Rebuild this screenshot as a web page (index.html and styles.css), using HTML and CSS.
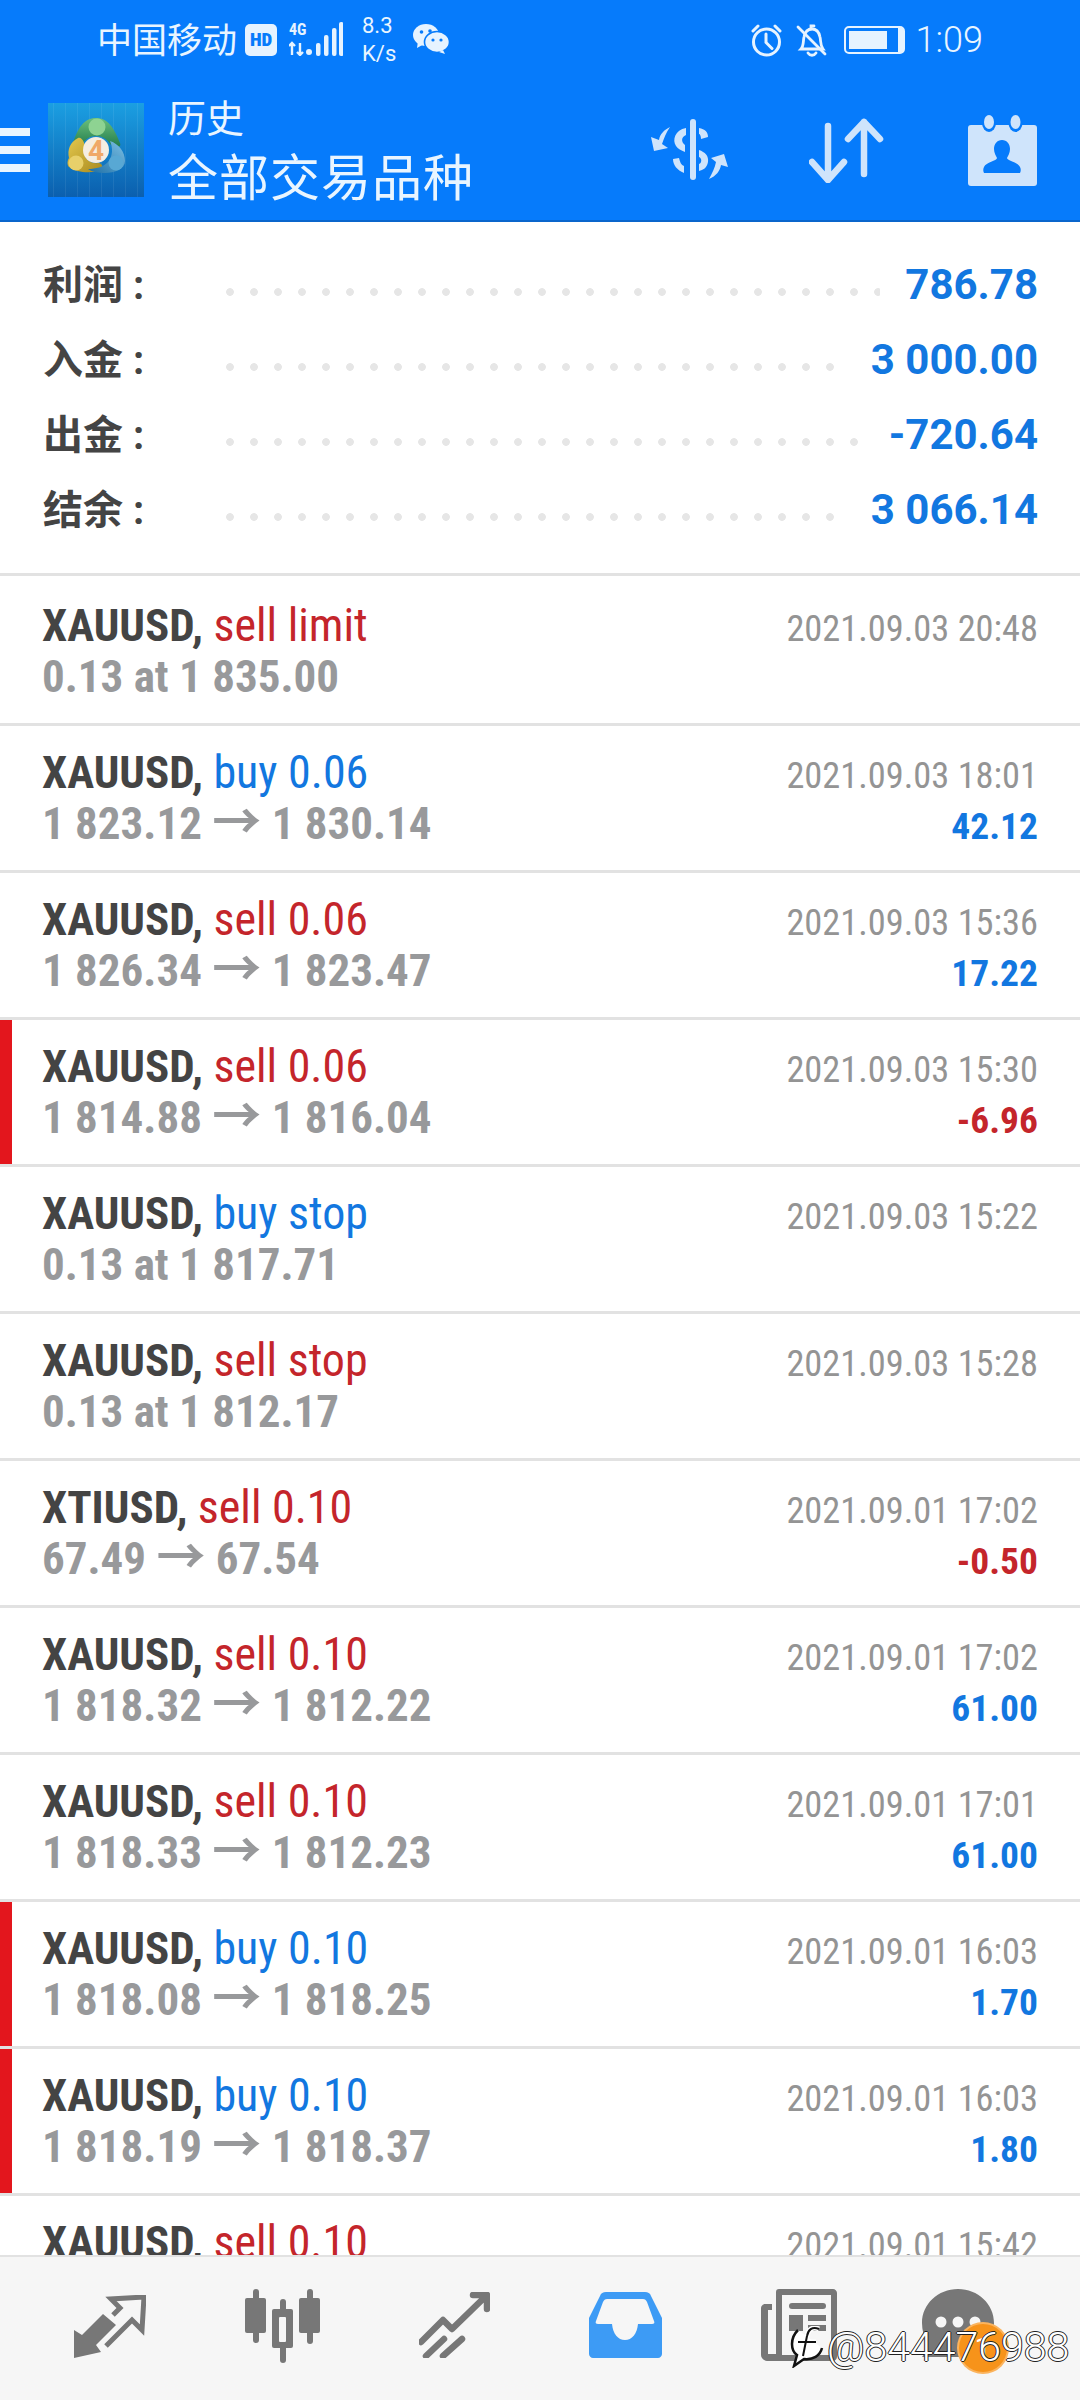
FILE: index.html
```html
<!DOCTYPE html>
<html lang="zh">
<head>
    <meta charset="UTF-8">
    <meta name="viewport" content="width=device-width, initial-scale=1.0">
    <title>历史</title>
    <link rel="stylesheet" href="styles.css">
</head>
<body>
    <header class="header">
        <div class="status-bar">
            <div class="status-left">
                <span class="carrier">中国移动</span>
                <span class="hd-badge">HD</span>
                <svg class="signal" width="54" height="34" viewBox="0 0 54 34">
                    <text x="0" y="13" class="signal-text">4G</text>
                    <path d="M3 21v12M0 24l3-3 3 3M11 33V21M8 30l3 3 3-3" fill="none" stroke="#e6f3ff" stroke-width="2.4"/>
                    <circle cx="20" cy="30" r="3" fill="#e6f3ff"/>
                    <rect x="27" y="21" width="4.5" height="13" rx="2" fill="#e6f3ff"/>
                    <rect x="35" y="13" width="4.5" height="21" rx="2" fill="#e6f3ff"/>
                    <rect x="43" y="6" width="4.5" height="28" rx="2" fill="#e6f3ff"/>
                    <rect x="50" y="0" width="4.5" height="34" rx="2" fill="#e6f3ff"/>
                </svg>
                <span class="net-speed">8.3<br>K/s</span>
                <svg class="wechat" width="36" height="30" viewBox="0 0 36 30">
                    <ellipse cx="13" cy="11" rx="13" ry="11" fill="#e6f3ff"/>
                    <path d="M5 17l-1 7 7-4z" fill="#e6f3ff"/>
                    <ellipse cx="24" cy="18" rx="12.5" ry="10.5" fill="#e6f3ff" stroke="#067bfb" stroke-width="1.6"/>
                    <path d="M30 26l2 4-6-2z" fill="#e6f3ff"/>
                    <circle cx="8.500" cy="8" r="1.800" fill="#067bfb"/>
                    <circle cx="17" cy="7" r="1.800" fill="#067bfb"/>
                    <circle cx="20" cy="16" r="1.600" fill="#067bfb"/>
                    <circle cx="28" cy="16" r="1.600" fill="#067bfb"/>
                </svg>
            </div>
            <div class="status-right">
                <svg width="33" height="33" viewBox="0 0 33 33" fill="none" stroke="#e6f3ff" stroke-width="3">
                    <circle cx="16.500" cy="18" r="13"/>
                    <path d="M16 10v8.500l6 6M3 7l5-5M30 7l-5-5" stroke-linecap="round"/>
                </svg>
                <svg width="31" height="33" viewBox="0 0 31 33" fill="none" stroke="#e6f3ff" stroke-width="2.800">
                    <path d="M5 25c3-3 2-8 3-12 1-5 4-8 8-8s7 3 8 8c1 4 0 8 3 12z"/>
                    <path d="M12 29c2 3 6 3 8 0M15 5V2h3M2 3l27 27" stroke-linecap="round"/>
                </svg>
                <span class="battery"><span class="battery-fill"></span></span>
                <span class="clock">1:09</span>
            </div>
        </div>
        <div class="toolbar">
            <div class="menu-btn"><span></span><span></span><span></span></div>
            <svg class="app-icon" width="96" height="94" viewBox="0 0 96 94">
                <defs>
                    <linearGradient id="tile" x1="0" y1="0" x2="0" y2="1">
                        <stop offset="0" stop-color="#1b9fe2"/>
                        <stop offset="1" stop-color="#0b5fae"/>
                    </linearGradient>
                    <pattern id="grid" width="12" height="94" patternUnits="userSpaceOnUse">
                        <rect x="5" width="1" height="94" fill="#ffffff" opacity="0.07"/>
                    </pattern>
                    <linearGradient id="green" x1="0" y1="0" x2="0" y2="1">
                        <stop offset="0" stop-color="#6cc07c"/>
                        <stop offset="1" stop-color="#1f7a4c"/>
                    </linearGradient>
                    <linearGradient id="gold" x1="0" y1="0" x2="1" y2="1">
                        <stop offset="0" stop-color="#e4c84e"/>
                        <stop offset="1" stop-color="#a98a1e"/>
                    </linearGradient>
                    <linearGradient id="aqua" x1="1" y1="0" x2="0" y2="1">
                        <stop offset="0" stop-color="#7cc0e4"/>
                        <stop offset="1" stop-color="#1c6ea6"/>
                    </linearGradient>
                </defs>
                <rect width="96" height="94" fill="url(#tile)"/>
                <rect width="96" height="94" fill="url(#grid)"/>
                <path d="M48 15c12 0 18 10 24 25 2 5-6 6-9 2-4-6-9-9-15-9s-11 3-14 9c-3 4-11 3-9-2 5-15 11-25 23-25z" fill="url(#green)"/>
                <circle cx="49" cy="24" r="8.500" fill="#8ed392"/>
                <path d="M30 35c-8 4-11 12-9 20-2 3-2 7 0 9 8 6 21 6 31 4 4-2 3-7-1-8-9 1-16-4-14-14 1-4-3-13-7-11z" fill="url(#gold)"/>
                <circle cx="28" cy="60" r="7.500" fill="#e8d06a"/>
                <path d="M62 38c9 3 15 11 15 20 0 8-10 12-20 12-6 0-13-1-17-4 8 0 15-2 20-7 5-6 5-14 2-21z" fill="url(#aqua)"/>
                <circle cx="68" cy="60" r="7.500" fill="#58a8d4"/>
                <circle cx="48" cy="47" r="13" fill="#f5ede2"/>
                <text x="48" y="57" class="mt4-num">4</text>
            </svg>
            <div class="titles">
                <div class="title-small">历史</div>
                <div class="title-big">全部交易品种</div>
            </div>
            <div class="tool-icons">
                <svg width="80" height="62" viewBox="0 0 80 62" fill="#cfe4fb">
                    <rect x="40" y="0" width="6" height="61" rx="3"/>
                    <path d="M36 9c-11 2-14 12-10 18 2 3 5 4 9 6v-7c-4-3-4-8 1-10zM49 9c6 1 9 4 9 9l-7 2c0-3-1-5-2-5z"/>
                    <path d="M49 31c6 2 10 6 9 12-1 6-5 8-9 9v-7c3-1 3-6 0-7zM23 40c0 6 4 11 11 14v-7c-3-1-4-4-5-8z"/>
                    <path d="M20 8C14 11 10 15 9 21L1 18l3 14 14-3-6-4c2-6 4-11 8-17z"/>
                    <path d="M59 60c7-3 11-8 12-14l7 2-4-13-13 4 5 4c-1 6-4 11-7 17z"/>
                </svg>
                <svg width="75" height="65" viewBox="0 0 75 65" fill="none" stroke="#cfe4fb" stroke-width="6.500" stroke-linecap="round" stroke-linejoin="round">
                    <path d="M19 8v54M3 44l16 18 16-18"/>
                    <path d="M55 4v52M39 21L55 4l16 17"/>
                </svg>
                <svg class="tool-contact" width="69" height="71" viewBox="0 0 69 71">
                    <rect x="0" y="10" width="69" height="61" rx="3" fill="#cfe4fb"/>
                    <ellipse cx="21" cy="8" rx="7" ry="9" fill="#067bfb"/>
                    <ellipse cx="47.500" cy="8" rx="7" ry="9" fill="#067bfb"/>
                    <ellipse cx="21" cy="7" rx="5" ry="7" fill="#cfe4fb"/>
                    <ellipse cx="47.500" cy="7" rx="5" ry="7" fill="#cfe4fb"/>
                    <path d="M34 25c5 0 8 4 8 9 0 4-2 7-3 9 0 3 11 4 13 9 1 2 1 4 0 6H16c-1-2-1-4 0-6 2-5 13-6 13-9-1-2-3-5-3-9 0-5 3-9 8-9z" fill="#067bfb"/>
                </svg>
            </div>
        </div>
    </header>

    <section class="summary">
        <div class="summary-row"><span class="summary-label">利润 :</span><span class="dots"></span><span class="summary-value">786.78</span></div>
        <div class="summary-row"><span class="summary-label">入金 :</span><span class="dots"></span><span class="summary-value">3 000.00</span></div>
        <div class="summary-row"><span class="summary-label">出金 :</span><span class="dots"></span><span class="summary-value">-720.64</span></div>
        <div class="summary-row"><span class="summary-label">结余 :</span><span class="dots"></span><span class="summary-value">3 066.14</span></div>
    </section>

    <main class="deals">
        <div class="deal">
            <div><div class="deal-title"><b>XAUUSD,</b> <span class="red">sell limit</span></div><div class="deal-price">0.13 at 1 835.00</div></div>
            <div class="deal-side"><div class="deal-date">2021.09.03 20:48</div></div>
        </div>
        <div class="deal">
            <div><div class="deal-title"><b>XAUUSD,</b> <span class="blue">buy 0.06</span></div><div class="deal-price">1 823.12 <span class="arrow">→</span> 1 830.14</div></div>
            <div class="deal-side"><div class="deal-date">2021.09.03 18:01</div><div class="deal-profit blue">42.12</div></div>
        </div>
        <div class="deal">
            <div><div class="deal-title"><b>XAUUSD,</b> <span class="red">sell 0.06</span></div><div class="deal-price">1 826.34 <span class="arrow">→</span> 1 823.47</div></div>
            <div class="deal-side"><div class="deal-date">2021.09.03 15:36</div><div class="deal-profit blue">17.22</div></div>
        </div>
        <div class="deal flagged">
            <div><div class="deal-title"><b>XAUUSD,</b> <span class="red">sell 0.06</span></div><div class="deal-price">1 814.88 <span class="arrow">→</span> 1 816.04</div></div>
            <div class="deal-side"><div class="deal-date">2021.09.03 15:30</div><div class="deal-profit red">-6.96</div></div>
        </div>
        <div class="deal">
            <div><div class="deal-title"><b>XAUUSD,</b> <span class="blue">buy stop</span></div><div class="deal-price">0.13 at 1 817.71</div></div>
            <div class="deal-side"><div class="deal-date">2021.09.03 15:22</div></div>
        </div>
        <div class="deal">
            <div><div class="deal-title"><b>XAUUSD,</b> <span class="red">sell stop</span></div><div class="deal-price">0.13 at 1 812.17</div></div>
            <div class="deal-side"><div class="deal-date">2021.09.03 15:28</div></div>
        </div>
        <div class="deal">
            <div><div class="deal-title"><b>XTIUSD,</b> <span class="red">sell 0.10</span></div><div class="deal-price">67.49 <span class="arrow">→</span> 67.54</div></div>
            <div class="deal-side"><div class="deal-date">2021.09.01 17:02</div><div class="deal-profit red">-0.50</div></div>
        </div>
        <div class="deal">
            <div><div class="deal-title"><b>XAUUSD,</b> <span class="red">sell 0.10</span></div><div class="deal-price">1 818.32 <span class="arrow">→</span> 1 812.22</div></div>
            <div class="deal-side"><div class="deal-date">2021.09.01 17:02</div><div class="deal-profit blue">61.00</div></div>
        </div>
        <div class="deal">
            <div><div class="deal-title"><b>XAUUSD,</b> <span class="red">sell 0.10</span></div><div class="deal-price">1 818.33 <span class="arrow">→</span> 1 812.23</div></div>
            <div class="deal-side"><div class="deal-date">2021.09.01 17:01</div><div class="deal-profit blue">61.00</div></div>
        </div>
        <div class="deal flagged">
            <div><div class="deal-title"><b>XAUUSD,</b> <span class="blue">buy 0.10</span></div><div class="deal-price">1 818.08 <span class="arrow">→</span> 1 818.25</div></div>
            <div class="deal-side"><div class="deal-date">2021.09.01 16:03</div><div class="deal-profit blue">1.70</div></div>
        </div>
        <div class="deal flagged">
            <div><div class="deal-title"><b>XAUUSD,</b> <span class="blue">buy 0.10</span></div><div class="deal-price">1 818.19 <span class="arrow">→</span> 1 818.37</div></div>
            <div class="deal-side"><div class="deal-date">2021.09.01 16:03</div><div class="deal-profit blue">1.80</div></div>
        </div>
        <div class="deal">
            <div><div class="deal-title"><b>XAUUSD,</b> <span class="red">sell 0.10</span></div></div>
            <div class="deal-side"><div class="deal-date">2021.09.01 15:42</div></div>
        </div>
    </main>

    <nav class="tabbar">
        <svg class="tab-quotes" width="72" height="64" viewBox="0 0 72 64">
            <path d="M0 63V35l8 5 21-21 13 11-20 20 5 7z" fill="#777"/>
            <path d="M39 20l7-7-9-9 33-2-2 33-10-10-26 26" fill="none" stroke="#777" stroke-width="5"/>
        </svg>
        <svg width="75" height="74" viewBox="0 0 75 74" fill="#777">
            <rect x="8" y="0" width="6" height="54" rx="3"/>
            <rect x="0" y="9" width="21" height="35" rx="2"/>
            <rect x="35" y="10" width="6" height="64" rx="3"/>
            <rect x="27" y="20" width="21" height="39" rx="2"/>
            <rect x="34" y="28" width="7" height="25" rx="1" fill="#f6f6f6"/>
            <rect x="62" y="0" width="6" height="55" rx="3"/>
            <rect x="54" y="9" width="21" height="35" rx="2"/>
        </svg>
        <svg class="tab-trade" width="71" height="66" viewBox="0 0 71 66" fill="none" stroke="#777" stroke-width="6.500" stroke-linecap="round" stroke-linejoin="round">
            <path d="M2 50l22-22 9 9L67 4M54 3h14v14"/>
            <path d="M7 64l18-17M24 64l19-17"/>
        </svg>
        <svg class="tab-history" width="73" height="66" viewBox="0 0 73 66">
            <path d="M17 0h39c3 0 5 1 6 4l11 22v36c0 2-2 4-4 4H4c-2 0-4-2-4-4V26L11 4c1-3 3-4 6-4z" fill="#3d9bf5"/>
            <path d="M18 7h36c2 0 3 1 4 3l7 19c1 2 0 3-2 3H49c-1 10-6 16-13 16s-12-6-13-16H9c-2 0-3-1-2-3l7-19c1-2 2-3 4-3z" fill="#f6f6f6"/>
        </svg>
        <svg width="76" height="72" viewBox="0 0 76 72">
            <path d="M18 0h54c2 0 4 2 4 4v64c0 2-2 4-4 4H6c-3 0-6-3-6-6V19c0-2 2-4 4-4h7v6H7v44h8V3c0-2 1-3 3-3z" fill="#777"/>
            <rect x="21" y="6" width="49" height="60" fill="#f6f6f6"/>
            <rect x="28" y="14" width="37" height="6" rx="3" fill="#777"/>
            <rect x="28" y="26" width="14" height="16" fill="#777"/>
            <rect x="47" y="26" width="18" height="6" fill="#777"/>
            <rect x="47" y="36" width="18" height="6" fill="#777"/>
        </svg>
        <svg class="tab-chat" width="72" height="72" viewBox="0 0 72 72">
            <path d="M36 0c20 0 36 15 36 34S56 68 36 68H0c4-5 5-9 5-14C2 48 0 41 0 34 0 15 16 0 36 0z" fill="#777"/>
            <circle cx="19" cy="33" r="5.500" fill="#f6f6f6"/>
            <circle cx="36" cy="33" r="5.500" fill="#f6f6f6"/>
            <circle cx="53" cy="33" r="5.500" fill="#f6f6f6"/>
        </svg>
        <span class="badge">1</span>
        <div class="watermark">
            <svg width="36" height="42" viewBox="0 0 36 42" fill="none">
                <path d="M8 4c-3 3-6 8-6 14 0 5 2 9 5 11l-3 11 10-7c9 1 16-3 18-11" stroke="#111" stroke-width="2.500" fill="#fff"/>
                <path d="M29 3c-7-3-11 1-12 7l-4 20M8 16h18" stroke="#fff" stroke-width="5"/>
                <path d="M29 3c-7-3-11 1-12 7l-4 20M8 16h18" stroke="#111" stroke-width="2"/>
            </svg>
            <span>@844476988</span>
        </div>
    </nav>
</body>
</html>
```
FILE: styles.css
```css
* {
    box-sizing: border-box;
}

body {
    margin: 0;
    width: 1080px;
    height: 2400px;
    display: flex;
    flex-direction: column;
    overflow: hidden;
    background-color: #ffffff;
    font-family: Roboto, "Noto Sans CJK SC", sans-serif;
}

/* top blue area */
.header {
    height: 222px;
    background-color: #067bfb;
    border-bottom: 2px solid #0a66cc;
    color: #e9f5ff;
}

.status-bar {
    height: 80px;
    display: flex;
    justify-content: space-between;
    align-items: center;
    padding: 0 97px 0 97px;
}

.status-left, .status-right {
    display: flex;
    align-items: center;
}

.carrier {
    font-size: 35px;
    width: 148px;
    padding-bottom: 5px;
    white-space: nowrap;
}

.hd-badge {
    width: 32px;
    height: 32px;
    border-radius: 5px;
    background-color: #e6f3ff;
    color: #067bfb;
    font-size: 19px;
    font-weight: 900;
    font-stretch: 75%;
    line-height: 32px;
    text-align: center;
}

.signal {
    margin-left: 12px;
    margin-top: -2px;
}

.signal-text {
    font-family: Roboto;
    font-stretch: 75%;
    font-size: 16px;
    font-weight: 700;
    fill: #e6f3ff;
}

.net-speed {
    margin-left: 19px;
    width: 51px;
    font-size: 22px;
    line-height: 28px;
}

.wechat {
    margin-top: -2px;
}

.status-right svg {
    margin-right: 13px;
}

.status-right svg:first-child {
    margin-left: -4px;
}

.battery {
    width: 61px;
    height: 28px;
    margin-left: 4px;
    margin-right: 12px;
    padding: 3px;
    border: 2px solid #e6f3ff;
    border-right-width: 7px;
    border-radius: 5px;
}

.battery-fill {
    display: block;
    width: 38px;
    height: 100%;
    background-color: #e6f3ff;
}

.clock {
    font-size: 36px;
    font-weight: 300;
    margin-left: -1px;
}

.toolbar {
    height: 140px;
    display: flex;
    align-items: center;
}

.menu-btn {
    width: 30px;
    margin-right: 18px;
    display: flex;
    flex-direction: column;
    gap: 10px;
}

.menu-btn span {
    height: 8px;
    background-color: #e9f5ff;
}

.titles {
    margin-left: 24px;
    padding-top: 4px;
}

.title-small {
    font-size: 38px;
    line-height: 50px;
}

.title-big {
    margin-top: 4px;
    font-size: 50px;
    line-height: 62px;
    letter-spacing: 1px;
}

.tool-icons {
    margin-left: auto;
    padding-right: 43px;
    display: flex;
    align-items: center;
    gap: 79px;
}

.tool-contact {
    margin-left: 5px;
}

.mt4-num {
    font-family: Roboto;
    font-size: 28px;
    font-weight: 700;
    fill: #f0a868;
    text-anchor: middle;
}

/* totals */
.summary {
    padding: 25px 42px 26px 43px;
    border-bottom: 3px solid #e2e2e2;
}

.summary-row {
    height: 75px;
    display: flex;
    align-items: center;
}

.summary-label {
    width: 183px;
    padding-bottom: 5px;
    font-size: 40px;
    font-weight: 700;
    color: #444444;
    white-space: nowrap;
}

.dots {
    flex: 1;
    height: 8px;
    margin: 14px 25px 0 0;
    background-image: radial-gradient(circle at 4px 4px, #e6e6e6 3.5px, transparent 4.2px);
    background-size: 24px 8px;
    background-repeat: repeat-x;
}

.summary-value {
    font-size: 42px;
    font-weight: 700;
    color: #1277e0;
    white-space: nowrap;
}

/* deal rows */
.deals {
    flex: 1;
    overflow: hidden;
    font-stretch: 75%;
}

.deal {
    height: 147px;
    padding: 21px 42px 0 42px;
    display: flex;
    justify-content: space-between;
    border-bottom: 3px solid #e2e2e2;
    line-height: 50px;
}

.deal:first-child {
    height: 150px;
    padding-top: 24px;
}

.flagged {
    box-shadow: inset 12px 0 0 #e3161d;
}

.deal-title {
    font-size: 45px;
    color: #444444;
}

.deal-title .red, .deal-title .blue {
    font-size: 46px;
}

.deal-price {
    margin-top: 1px;
    font-size: 45px;
    font-weight: 700;
    color: #98999b;
}

.arrow {
    font-size: 49px;
    line-height: 40px;
}

.deal-side {
    margin-top: 4px;
    text-align: right;
}

.deal-date {
    font-size: 36.400px;
    color: #949494;
}

.deal-profit {
    font-size: 37.500px;
    font-weight: 700;
}

.red {
    color: #c4252b;
}

.blue {
    color: #1277e0;
}

/* bottom tabs */
.tabbar {
    position: relative;
    height: 145px;
    flex-shrink: 0;
    background-color: #f6f6f6;
    border-top: 2px solid #e2e2e2;
    padding: 32px 0 0 74px;
    display: flex;
    gap: 99px;
    align-items: flex-start;
}

.tab-quotes {
    margin-top: 6px;
}

.tab-trade, .tab-history {
    margin-top: 3px;
}

.tab-chat {
    margin-left: -14px;
}

.badge {
    position: absolute;
    left: 959px;
    top: 67px;
    width: 48px;
    height: 48px;
    border-radius: 50%;
    background-color: #f7931a;
    box-shadow: 0 0 0 2px #fbb45e;
    color: #ffffff;
    font-size: 30px;
    line-height: 48px;
    text-align: center;
}

.watermark {
    position: absolute;
    left: 790px;
    top: 66px;
    display: flex;
    align-items: center;
    gap: 1px;
    font-size: 41px;
    font-weight: 300;
    color: #ffffff;
    text-shadow: 1px 0 0 #222, -1px 0 0 #222, 0 1px 0 #222, 0 -1px 0 #222;
}
```
